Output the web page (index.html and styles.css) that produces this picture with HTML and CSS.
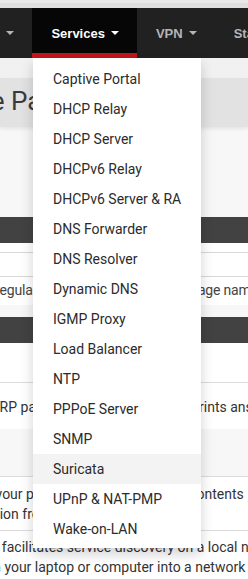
FILE: index.html
```html
<!DOCTYPE html>
<html lang="en">
<head>
    <meta charset="UTF-8">
    <meta name="viewport" content="width=device-width, initial-scale=1.0">
    <title>Package Manager</title>
    <link rel="stylesheet" href="styles.css">
</head>
<body>
    <div class="chrome"></div>

    <nav class="navbar">
        <ul class="nav">
            <li class="nav-item">Firewall <span class="caret"></span></li>
            <li class="nav-item active">Services <span class="caret"></span></li>
            <li class="nav-item">VPN <span class="caret"></span></li>
            <li class="nav-item">Status <span class="caret"></span></li>
        </ul>

        <ul class="dropdown">
            <li>Captive Portal</li>
            <li>DHCP Relay</li>
            <li>DHCP Server</li>
            <li>DHCPv6 Relay</li>
            <li>DHCPv6 Server &amp; RA</li>
            <li>DNS Forwarder</li>
            <li>DNS Resolver</li>
            <li>Dynamic DNS</li>
            <li>IGMP Proxy</li>
            <li>Load Balancer</li>
            <li>NTP</li>
            <li>PPPoE Server</li>
            <li>SNMP</li>
            <li class="hover">Suricata</li>
            <li>UPnP &amp; NAT-PMP</li>
            <li>Wake-on-LAN</li>
        </ul>
    </nav>

    <div class="page">
        <div class="top-gap"></div>
        <div class="page-header">
            <h1 class="title">System / Package Manager / Available Packages</h1>
        </div>
        <div class="gap-1"></div>

        <div class="panel">
            <div class="panel-heading">Search</div>
            <div class="panel-body">
                <div class="search-row"></div>
                <p class="help help-search">Enter a search string or *nix regular expression to search package names and descriptions.</p>
            </div>
        </div>

        <div class="gap-2"></div>

        <div class="panel">
            <div class="panel-heading">Packages</div>
            <div class="table-head"></div>
            <div class="row row-arping">
                <p class="desc desc-arping">Broadcasts a who-has ARP packet on the network, and prints answers.</p>
            </div>
            <div class="row row-stripe"></div>
            <div class="row row-backup">
                <p class="desc desc-backup">Use this to make a backup of your package file and directory contents<br>Allows download plus restoration from the GUI.</p>
            </div>
            <div class="row row-avahi">
                <p class="desc desc-avahi">Avahi is a system which facilitates service discovery on a local network.<br>It means you can plug <span class="mark">in</span> your laptop or computer into a network and instantly see other people.</p>
            </div>
        </div>
    </div>
</body>
</html>
```

FILE: styles.css
```css
body {
    margin: 0;
    width: 248px;
    height: 579px;
    overflow: hidden;
    font-family: Roboto, "Liberation Sans", sans-serif;
    background-color: #f7f7f7;
    color: #333;
}

.chrome {
    height: 8px;
    background-color: #dedede;
    border-top: 3px solid #e8e8e8;
    box-sizing: border-box;
}

/* top navigation */
.navbar {
    position: relative;
    height: 50px;
    background-color: #212121;
}

.nav {
    display: flex;
    margin: 0 0 0 -67px;
    padding: 0;
    list-style: none;
    white-space: nowrap;
}

.nav-item {
    display: flex;
    align-items: center;
    gap: 6px;
    height: 50px;
    padding: 0 18px 0 19px;
    box-sizing: border-box;
    font-family: "Liberation Sans", Arial, sans-serif;
    font-size: 13px;
    font-weight: bold;
    color: #b5b5b5;
}

.nav-item.active {
    background-color: #060606;
    color: #fff;
    border-bottom: 5px solid #c1161c;
    padding-top: 5px;
}

.caret {
    width: 0;
    height: 0;
    border-top: 4px solid currentColor;
    border-left: 4px solid transparent;
    border-right: 4px solid transparent;
}

.dropdown {
    position: absolute;
    top: 50px;
    left: 33px;
    width: 168px;
    margin: 0;
    padding: 6px 0 4px;
    list-style: none;
    background-color: #fff;
    box-shadow: 0 6px 12px rgba(0, 0, 0, 0.18);
    z-index: 10;
}

.dropdown li {
    height: 30px;
    line-height: 30px;
    padding-left: 20px;
    font-size: 14px;
    color: #2b2b2b;
}

.dropdown li.hover {
    background-color: #f3f3f3;
}

/* page behind the menu */
.page {
    white-space: nowrap;
    overflow: hidden;
}

.top-gap {
    height: 20px;
    background-color: #f1f1f1;
}

.page-header {
    height: 49px;
    background-color: #e2e2e2;
    box-shadow: 0 2px 4px rgba(0, 0, 0, 0.08);
    display: flex;
    align-items: center;
    overflow: hidden;
}

.title {
    margin: 0 0 3px;
    font-size: 26px;
    font-weight: normal;
    color: #3a3a3a;
    text-indent: -442px;
}

.gap-1 {
    height: 90px;
}

.panel {
    background-color: #fff;
}

.panel-heading {
    height: 26px;
    background-color: #424242;
    color: #424242;
    font-size: 1px;
}

.panel-body {
    padding-top: 9px;
}

.search-row {
    height: 23px;
    border-top: 1px solid #d8d8d8;
    border-bottom: 1px solid #d8d8d8;
}

.help {
    margin: 0;
    height: 28px;
    line-height: 26px;
    font-size: 14px;
    color: #444;
}

.help-search {
    letter-spacing: -0.2px;
    text-indent: -174px;
}

.gap-2 {
    height: 12px;
    background-color: #f7f7f7;
}

.table-head {
    height: 39px;
}

.row {
    border-top: 1px solid #dcdcdc;
}

.row-arping {
    height: 46px;
}

.row-stripe {
    height: 47px;
    border-top: none;
    background-color: #f7f7f7;
}

.row-backup {
    height: 53px;
}

.row-avahi {
    height: 60px;
}

.desc {
    margin: 0;
    font-size: 14px;
    line-height: 20px;
    color: #333;
}

.desc-arping {
    padding-top: 14px;
    text-indent: -151px;
}

.desc-backup {
    padding-top: 7px;
    margin-left: -188px;
}

.desc-avahi {
    padding-top: 6px;
    margin-left: -150px;
}

.mark {
    color: #4fb3e8;
}
```
